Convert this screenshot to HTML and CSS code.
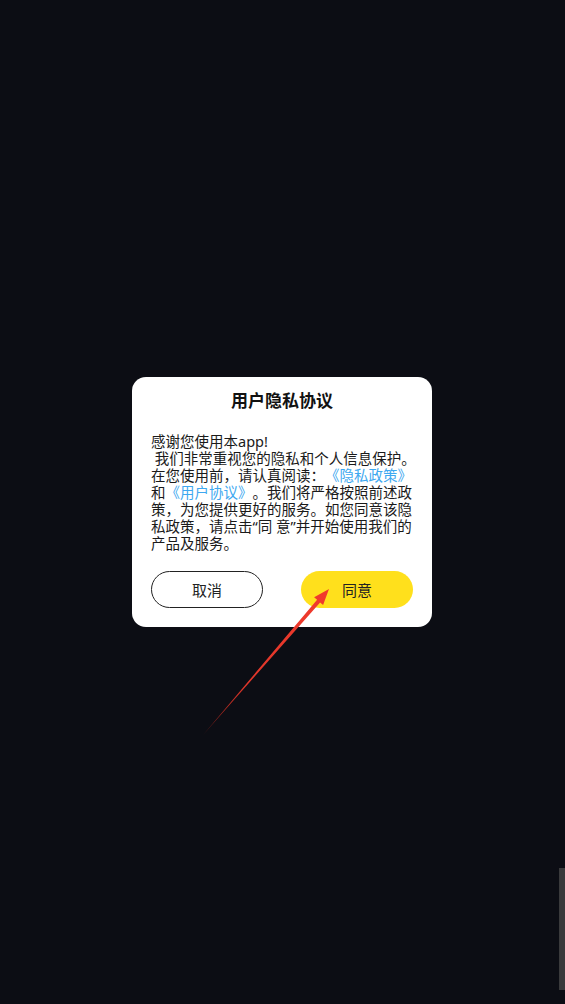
FILE: index.html
```html
<!DOCTYPE html>
<html lang="zh-CN">
<head>
<meta charset="utf-8">
<title>用户隐私协议</title>
<link rel="stylesheet" href="styles.css">
</head>
<body>
<div class="screen">
  <div class="dialog">
    <div class="title">用户隐私协议</div>
    <div class="content">
      <div class="line">感谢您使用本app!</div>
      <div class="line">&nbsp;我们非常重视您的隐私和个人信息保护。</div>
      <div class="line">在您使用前，请认真阅读：<span class="link">《隐私政策》</span></div>
      <div class="line">和<span class="link">《用户协议》</span>。我们将严格按照前述政</div>
      <div class="line">策，为您提供更好的服务。如您同意该隐</div>
      <div class="line">私政策，请点击“同 意”并开始使用我们的</div>
      <div class="line">产品及服务。</div>
    </div>
    <div class="actions">
      <div class="btn cancel">取消</div>
      <div class="btn agree">同意</div>
    </div>
  </div>
  <svg class="arrow" width="565" height="1004" viewBox="0 0 565 1004">
    <defs>
      <linearGradient id="ag" x1="203" y1="735" x2="329" y2="589" gradientUnits="userSpaceOnUse">
        <stop offset="0" stop-color="#7a1a14"/>
        <stop offset="0.35" stop-color="#e0362a"/>
        <stop offset="1" stop-color="#f23a2c"/>
      </linearGradient>
    </defs>
    <polygon fill="url(#ag)" points="203,735 317.1,599.8 314.1,597.2 329,589 323.1,605 320.1,602.4"/>
  </svg>
  <div class="scrollbar"></div>
</div>
</body>
</html>
```
FILE: styles.css
```css
html, body {
  margin: 0;
  padding: 0;
  background: #0c0d14;
}
.screen {
  position: relative;
  width: 565px;
  height: 1004px;
  display: flex;
  align-items: center;
  justify-content: center;
  overflow: hidden;
  font-family: "Noto Sans", "Noto Sans CJK SC", sans-serif;
  text-spacing-trim: space-all;
}
.dialog {
  width: 300px;
  box-sizing: border-box;
  background: #ffffff;
  border-radius: 14px;
  padding: 12px 19px 19px;
  margin-left: -1px;
}
.title {
  text-align: center;
  font-size: 17px;
  font-weight: bold;
  line-height: 24px;
  color: #111;
}
.content {
  margin-top: 20px;
  font-size: 14.5px;
  line-height: 17px;
  color: #1a1a1a;
}
.line {
  white-space: nowrap;
}
.link {
  color: #3ea8f0;
}
.actions {
  margin-top: 19px;
  display: flex;
  justify-content: space-between;
}
.btn {
  width: 112px;
  height: 37px;
  box-sizing: border-box;
  border-radius: 19px;
  display: flex;
  align-items: center;
  justify-content: center;
  font-size: 15px;
  color: #222;
}
.cancel {
  border: 1.5px solid #222;
}
.agree {
  background: #ffe01c;
}
.arrow {
  position: absolute;
  left: 0;
  top: 0;
}
.scrollbar {
  position: absolute;
  right: 0;
  top: 868px;
  width: 6px;
  height: 122px;
  background: #3a3a3c;
}
```
